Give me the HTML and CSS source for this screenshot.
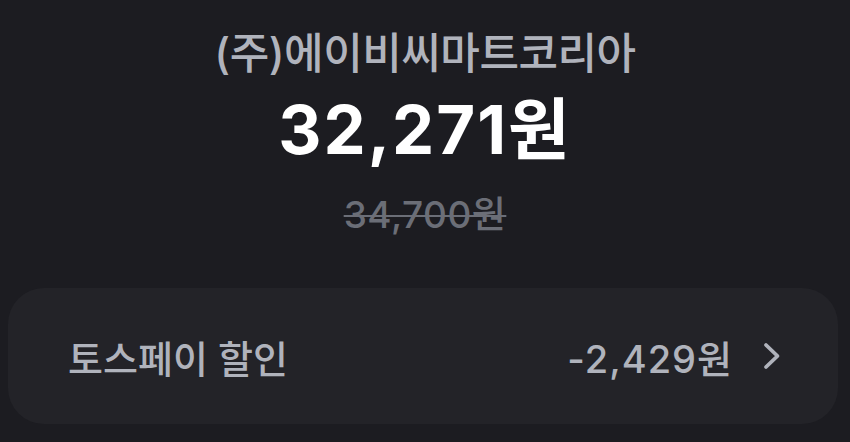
FILE: index.html
```html
<!DOCTYPE html>
<html lang="ko">
<head>
<meta charset="utf-8">
<link rel="stylesheet" href="styles.css">
</head>
<body>
<main class="page">
  <section class="summary">
    <div class="merchant">(주)에이비씨마트코리아</div>
    <div class="price">32,271원</div>
    <div class="original">34,700원</div>
  </section>
  <section class="card">
    <div class="row">
      <span class="label">토스페이 할인</span>
      <span class="value">-2,429원
        <svg class="chev" width="18" height="28" viewBox="0 0 18 28"><path d="M3 3 L14.5 14 L3 25" fill="none" stroke="#b0b3bc" stroke-width="3.8" stroke-linecap="round" stroke-linejoin="round"/></svg>
      </span>
    </div>
  </section>
</main>
</body>
</html>
```
FILE: styles.css
```css
html, body {
  margin: 0;
  padding: 0;
  background: #1c1c21;
}
.page {
  width: 850px;
  height: 442px;
  overflow: hidden;
  font-family: "Inter", "Noto Sans CJK KR", sans-serif;
}
.summary {
  display: flex;
  flex-direction: column;
  align-items: center;
  padding-top: 25px;
}
.merchant {
  font-size: 43px;
  font-weight: 500;
  color: #b0b3bc;
  line-height: 56px;
  letter-spacing: -0.5px;
}
.price {
  font-size: 67px;
  font-weight: 700;
  color: #ffffff;
  line-height: 80px;
  margin-top: 9px;
  letter-spacing: 2px;
}
.original {
  font-size: 37px;
  font-weight: 500;
  color: #6b6e77;
  line-height: 48px;
  text-decoration: line-through;
  text-decoration-thickness: 2px;
  margin-top: 21px;
  letter-spacing: 0.5px;
}
.card {
  margin: 49px 12px 0 8px;
  height: 136px;
  background: #232328;
  border-radius: 36px;
  display: flex;
  align-items: center;
}
.row {
  flex: 1;
  display: flex;
  justify-content: space-between;
  align-items: center;
  padding: 0 57px 0 60px;
}
.label, .value {
  font-size: 38px;
  font-weight: 500;
  color: #b0b3bc;
}
.value {
  display: flex;
  align-items: center;
  gap: 30px;
  letter-spacing: 1px;
}
.chev {
  display: block;
}
```
